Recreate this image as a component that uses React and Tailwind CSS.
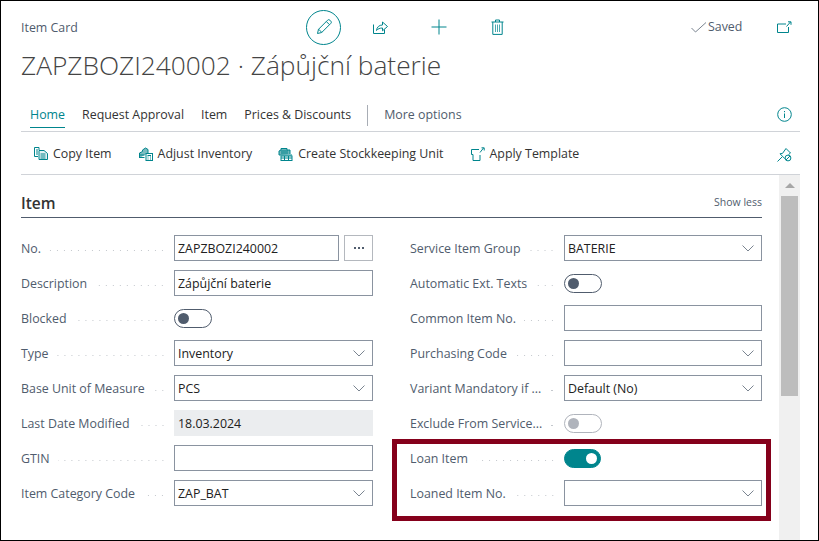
const T = "#00858d";

const Ic = ({ w = 16, h = 16, vb, children, sw = 1 }) => (
  <svg width={w} height={h} viewBox={vb || `0 0 ${w} ${h}`} fill="none" stroke={T} strokeWidth={sw}>{children}</svg>
);

const Pencil = () => (
  <Ic w={16} h={16}>
    <path d="M1.5 14.5l1-4.2L11.6 1.2a1.6 1.6 0 0 1 2.3 0l.9.9a1.6 1.6 0 0 1 0 2.3L5.7 13.5z" />
    <path d="M2.6 10.2l3.2 3.2M10.4 2.6l3 3" />
  </Ic>
);
const Share = () => (
  <Ic w={16} h={16}>
    <path d="M1.5 5.5v9h11v-4" />
    <path d="M4.5 11.5c.3-3.5 2.8-5.5 6-5.5V3l5 4.5-5 4.3V9c-2.6 0-4.6.8-6 2.5z" />
  </Ic>
);
const Plus = () => (
  <Ic w={16} h={16}><path d="M8 .5v15M.5 8h15" /></Ic>
);
const Trash = () => (
  <Ic w={13} h={16}>
    <path d="M.5 3h12M4.5 3V1h4v2M1.8 3v12.4h9.4V3" />
    <path d="M4.5 5.5v7.5M6.5 5.5v7.5M8.5 5.5v7.5" opacity=".7" />
  </Ic>
);
const Open = () => (
  <svg width="15" height="12" viewBox="0 0 15 12" fill="none" stroke={T}>
    <path d="M9 3H.5v8.5h11V6" />
    <path d="M9.5 5.5L13.5 1M11 .8h3v3" />
  </svg>
);
const Info = () => (
  <svg width="15" height="15" viewBox="0 0 15 15" fill="none" stroke={T}>
    <circle cx="7.5" cy="7.5" r="6.8" />
    <path d="M7.5 6.5v4.5M7.5 4v1.2" />
  </svg>
);
const PinOff = () => (
  <svg width="15" height="15" viewBox="0 0 15 15" fill="none" stroke={T}>
    <path d="M.5 14.5L5 10M3 6.8l2.5-.4L9 1.500l4.500 4.500-2 1.600M3 6.800l5 5" />
    <circle cx="11" cy="11" r="2.9" />
    <path d="M9 13l4-4" />
  </svg>
);
const Copy = () => (
  <svg width="14" height="13" viewBox="0 0 14 13" fill="none" stroke={T}>
    <path d="M5 3V.5H.5v9H4" />
    <path d="M5 3.5h5l3.5 3v6H5z" fill="#e3f2f3" />
    <path d="M6.5 7h5M6.5 9h5M6.5 11h5M2 3h2M2 5h2M2 7h2" />
  </svg>
);
const Adjust = () => (
  <svg width="14" height="14" viewBox="0 0 14 14" fill="none" stroke={T}>
    <path d="M.5 11V6l3-1.5V3l3-2 2.5 1.5V6" fill="#7cbcc0" />
    <path d="M.5 8h5M.5 10.5h5" />
    <rect x="7" y="6.5" width="6.5" height="7" fill="#fff" />
    <path d="M8.5 8.5h3.5M8.5 10h1M11 10h1M8.5 12h1M11 12h1" />
  </svg>
);
const Sku = () => (
  <svg width="15" height="14" viewBox="0 0 15 14" fill="none" stroke={T}>
    <path d="M1 8V4l2-1V1.500h6V3h3v4" fill="#6fb6ba" />
    <path d="M3 4h7M3 6h7M1 8h13" />
    <rect x="3" y="9" width="11" height="4.500" fill="#fff" />
    <path d="M3 11h11M6.500 9v4.500M10.500 9v4.500" />
  </svg>
);
const Template = () => (
  <svg width="14" height="14" viewBox="0 0 14 14" fill="none" stroke={T}>
    <path d="M8 2.500H.5v5H2v6h7V8" />
    <path d="M9 5.500L12.500 1M10.500.8h2.700v2.700" />
  </svg>
);
const Chevron = () => (
  <svg width="12" height="7" viewBox="0 0 12 7" fill="none" stroke="#7a8490"><path d="M.5.5L6 6l5.500-5.500" /></svg>
);

const Label = ({ children, right }) => (
  <div className={`flex items-center shrink-0 pt-[3px] ${right ? "w-[154px]" : "w-[153px]"}`}>
    <span className="text-[#505c6d] whitespace-nowrap">{children}</span>
    <span className="flex-1 mx-2 h-[3px] bg-[radial-gradient(circle,#c4c8cd_0.9px,transparent_1px)] bg-[length:7px_3px] bg-right mt-[2px]" />
  </div>
);

const Input = ({ value, select, className = "", disabled }) => (
  <div className={`flex items-center justify-between h-[26px] px-[3px] border ${disabled ? "bg-[#ebedef] border-[#ebedef]" : "border-[#8a93a0]"} text-[#212121] ${className || "flex-1"}`}>
    <span className="whitespace-nowrap pt-[3px]">{value}</span>
    {select && <span className="mr-[4px] flex"><Chevron /></span>}
  </div>
);

const Toggle = ({ on, disabled }) => (
  <div
    className={`h-[19px] rounded-full border flex items-center px-[3px] ${
      on ? "w-[37px] bg-[#00858d] border-[#00858d] justify-end" : disabled ? "w-[38px] border-[#b0b4bc] justify-start" : "w-[38px] border-[#505c6d] justify-start"
    }`}
  >
    <span className={`w-[11px] h-[11px] rounded-full ${on ? "bg-white" : disabled ? "bg-[#b0b4bc]" : "bg-[#505c6d]"}`} />
  </div>
);

const Row = ({ label, children, right }) => (
  <div className="flex items-center h-[26px] mb-[9px]">
    <Label right={right}>{label}</Label>
    {children}
  </div>
);

const Tab = ({ children, active, className = "" }) => (
  <span className={`relative whitespace-nowrap ${active ? "text-[#00858d]" : "text-[#333]"} ${className}`}>
    {children}
    {active && <span className="absolute left-0 right-0 bottom-[-3px] h-px bg-[#00858d]" />}
  </span>
);

const Action = ({ icon, children, className = "" }) => (
  <div className={`flex items-center gap-[5px] text-[#333] whitespace-nowrap ${className}`}>
    {icon}
    <span className="pt-[1px]">{children}</span>
  </div>
);

export default function App() {
  return (
    <div className="relative w-[819px] h-[541px] border border-black bg-white overflow-hidden flex flex-col pl-[20px] pr-[18px] text-[12.4px] font-['Open_Sans',sans-serif]">
      {/* Header */}
      <div className="flex items-center h-[52px] shrink-0">
        <span className="w-[285px] pt-[2px] text-[#505c6d]">Item Card</span>
        <div className="w-[35px] h-[35px] rounded-full border border-[#00858d] flex items-center justify-center"><Pencil /></div>
        <div className="w-[24px] ml-[27px] flex justify-center"><Share /></div>
        <div className="w-[24px] ml-[35px] flex justify-center"><Plus /></div>
        <div className="w-[24px] ml-[34px] flex justify-center"><Trash /></div>
        <div className="flex items-center ml-[182px] text-[#505c6d] pt-[1px]">
          <svg width="16" height="11" viewBox="0 0 16 11" fill="none" stroke="#7a8490"><path d="M.5 6l4 4L15 .5" /></svg>
          <span className="ml-[1px]">Saved</span>
        </div>
        <div className="ml-[35px] flex"><Open /></div>
      </div>

      {/* Title */}
      <div className="h-[27px] pb-[2px] flex items-center text-[26.3px] font-light text-[#444] whitespace-nowrap shrink-0">
        ZAPZBOZI240002 · Zápůjční baterie
      </div>

      {/* Tabs */}
      <div className="flex items-center h-[52px] pt-[20px] border-b border-[#d0d3d8] shrink-0 pl-[9px]">
        <Tab active>Home</Tab>
        <Tab className="ml-[17px]">Request Approval</Tab>
        <Tab className="ml-[17px]">Item</Tab>
        <Tab className="ml-[17px]">Prices &amp; Discounts</Tab>
        <span className="w-px h-[21px] bg-[#a8adb5] ml-[16px]" />
        <span className="ml-[16px] text-[#505c6d]">More options</span>
        <span className="ml-auto mr-[8px] flex mb-[2px]"><Info /></span>
      </div>

      {/* Actions */}
      <div className="flex items-center h-[43px] pt-[2px] border-b border-[#d0d3d8] shrink-0 pl-[13px]">
        <Action icon={<Copy />}>Copy Item</Action>
        <Action icon={<Adjust />} className="ml-[27px]">Adjust Inventory</Action>
        <Action icon={<Sku />} className="ml-[26px]">Create Stockkeeping Unit</Action>
        <Action icon={<Template />} className="ml-[27px]">Apply Template</Action>
        <span className="ml-auto mr-[8px] flex"><PinOff /></span>
      </div>

      {/* Body */}
      <div className="flex flex-1 min-h-0">
        <div className="flex-1 pr-[17px]">
          <div className="flex items-end justify-between h-[43px] pb-[4px] border-b border-[#505c6d]">
            <span className="text-[15.5px] font-semibold text-[#333] leading-[20px]">Item</span>
            <span className="text-[10.5px] text-[#505c6d] pb-[2px]">Show less</span>
          </div>

          <div className="flex pt-[17px]">
            <div className="w-[352px] shrink-0">
              <Row label="No.">
                <Input value="ZAPZBOZI240002" />
                <div className="ml-[5px] w-[29px] h-[26px] border border-[#b4b8be] flex items-center justify-center gap-[2px]">
                  <span className="w-[2px] h-[2px] bg-[#505c6d]" />
                  <span className="w-[2px] h-[2px] bg-[#505c6d]" />
                  <span className="w-[2px] h-[2px] bg-[#505c6d]" />
                </div>
              </Row>
              <Row label="Description"><Input value="Zápůjční baterie" /></Row>
              <Row label="Blocked"><Toggle /></Row>
              <Row label="Type"><Input value="Inventory" select /></Row>
              <Row label="Base Unit of Measure"><Input value="PCS" select /></Row>
              <Row label="Last Date Modified"><Input value="18.03.2024" disabled /></Row>
              <Row label="GTIN"><Input value="" /></Row>
              <Row label="Item Category Code"><Input value="ZAP_BAT" select /></Row>
            </div>
            <div className="flex-1 ml-[37px]">
              <Row right label="Service Item Group"><Input value="BATERIE" select /></Row>
              <Row right label="Automatic Ext. Texts"><Toggle /></Row>
              <Row right label="Common Item No."><Input value="" /></Row>
              <Row right label="Purchasing Code"><Input value="" select /></Row>
              <Row right label="Variant Mandatory if ..."><Input value="Default (No)" select /></Row>
              <Row right label="Exclude From Service..."><Toggle disabled /></Row>
              <Row right label="Loan Item"><Toggle on /></Row>
              <Row right label="Loaned Item No."><Input value="" select /></Row>
            </div>
          </div>
        </div>

        {/* Scrollbar */}
        <div className="w-[21px] shrink-0 bg-[#f0f0f0] flex flex-col items-center">
          <div className="h-[21px] flex items-center justify-center">
            <span className="w-0 h-0 border-l-[5px] border-r-[5px] border-b-[5px] border-l-transparent border-r-transparent border-b-[#a6a6a6]" />
          </div>
          <div className="w-[17px] h-[200px] bg-[#bdbdbd]" />
        </div>
      </div>

      {/* Annotation frame */}
      <div className="absolute left-[391px] top-[438px] w-[379px] h-[82px] border-[5px] border-[#85001b] pointer-events-none" />
    </div>
  );
}
